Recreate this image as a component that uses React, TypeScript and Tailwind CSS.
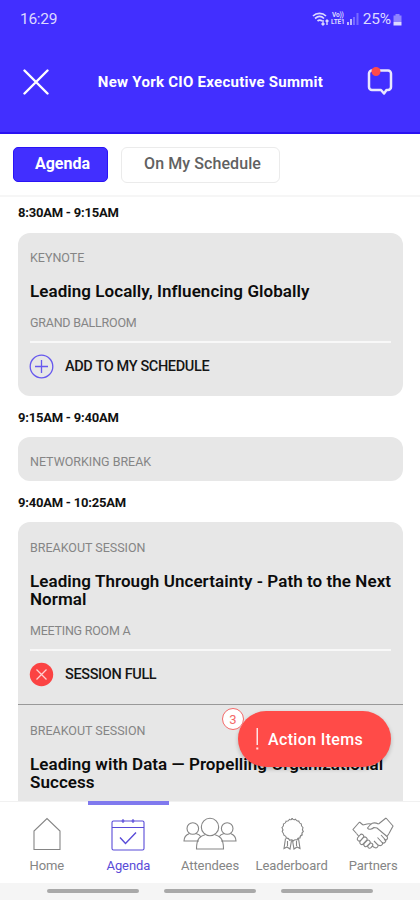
import type { ReactNode } from "react";

const bars = ["recents", "home", "back"];

const StatusBar = () => (
  <div className="flex h-[38px] items-center justify-between pl-[20px] pr-[18px] text-[15.5px] leading-[18px] text-[#dcd9ff]">
    <span className="tracking-[-0.3px]">16:29</span>
    <div className="flex items-center">
      <svg width="18" height="14" viewBox="0 0 18 14" fill="none" stroke="currentColor" strokeWidth="1.7">
        <path d="M1 4C4.500 .5 10.500 .5 14 4M3 6.500C6 4 9.500 4 12 6.500M5.500 9C7 7.800 8.500 7.800 10 9" />
        <path d="M11 8v5M9.500 11.500L11 13l1.500-1.500M15 13V8M13.600 9.500L15 8l1.500 1.500" strokeWidth="1.400" />
      </svg>
      <div className="flex w-[16px] flex-col items-center text-[6.5px] font-bold leading-[7px] tracking-[-0.2px]">
        <span>Vo))</span>
        <span>LTE1</span>
      </div>
      <svg className="ml-px" width="12" height="12" viewBox="0 0 12 12" fill="currentColor">
        <path d="M0 12V9h2v3zM3 12V6h2v6z" opacity=".8" />
        <path d="M6 12V4h2v8zM9.500 12V0h2v12z" opacity=".35" />
      </svg>
      <span className="ml-[4px] tracking-[-0.2px]">25%</span>
      <svg className="ml-[2px]" width="9" height="13" viewBox="0 0 9 13" fill="currentColor">
        <path d="M.5 2.500h2V1h4v1.500h2v6.500h-8z" opacity=".5" />
        <path d="M.5 9h8v3.500h-8z" />
      </svg>
    </div>
  </div>
);

const Header = () => (
  <header className="h-[134px] shrink-0 border-b-2 border-[#2a12f2] bg-[#422fff] text-white">
    <StatusBar />
    <div className="flex h-[88px] items-center justify-between pl-[23px] pr-[26px]">
      <svg width="26" height="26" viewBox="0 0 26 26" stroke="currentColor" strokeWidth="2.400" strokeLinecap="round">
        <path d="M1.500 1.500l23 23M24.500 1.500l-23 23" />
      </svg>
      <h1 className="pl-[6px] text-[15px] font-bold tracking-[0.27px]">New York CIO Executive Summit</h1>
      <svg width="28" height="30" viewBox="0 0 28 30" fill="none">
        <path d="M6 3.500h16a3 3 0 0 1 3 3V20a3 3 0 0 1-3 3h-1.500l-2.500 3.500-3-3.500H6a3 3 0 0 1-3-3V6.500a3 3 0 0 1 3-3z" stroke="#e9e7ff" strokeWidth="2.500" strokeLinejoin="round" />
        <circle cx="10" cy="4.500" r="4.500" fill="#ff4a4a" />
      </svg>
    </div>
  </header>
);

const Tabs = () => (
  <div className="flex h-[63px] shrink-0 gap-[13px] border-b-2 border-[#f6f6f6] pl-[13px] pt-[13px] text-[16px]">
    <button className="h-[35px] w-[95px] rounded-[5px] border border-[#2a14f5] bg-[#422fff] pb-[2px] pl-[4px] font-bold text-white">Agenda</button>
    <button className="h-[36px] w-[159px] rounded-[6px] border border-[#ebebeb] pb-[2px] pl-[4px] font-medium tracking-[0.08px] text-[#616161]">On My Schedule</button>
  </div>
);

const Time = ({ children }: { children: ReactNode }) => (
  <h2 className="h-[14px] text-[13px] font-bold leading-[14px] tracking-[-0.22px] text-[#111]">{children}</h2>
);

const Label = ({ children }: { children: ReactNode }) => (
  <p className="h-[14px] text-[12.5px] leading-[14px] tracking-[-0.02px] text-[#858585]">{children}</p>
);

const Room = ({ children }: { children: ReactNode }) => (
  <p className="mt-[16px] h-[14px] text-[12.5px] leading-[14px] tracking-[-0.24px] text-[#858585]">{children}</p>
);

const Title = ({ children }: { children: ReactNode }) => (
  <h3 className="mt-[17px] whitespace-nowrap text-[17px] font-semibold leading-[18px] tracking-[0.06px] text-[#0c0c0c]">{children}</h3>
);

const Plus = () => (
  <svg width="25" height="25" viewBox="0 0 25 25" fill="none" stroke="#6658ee" strokeWidth="1.300">
    <circle cx="12.500" cy="12.500" r="11.300" />
    <path d="M12.500 6v13M6 12.500h13" />
  </svg>
);

const Full = () => (
  <svg width="25" height="25" viewBox="0 0 25 25" fill="none">
    <circle cx="12.500" cy="12.500" r="11.700" fill="#fb4343" />
    <path d="M7.500 7.500l10 10M17.500 7.500l-10 10" stroke="#ffd0d0" strokeWidth="1.300" />
  </svg>
);

const Action = ({ icon, children }: { icon: ReactNode; children: ReactNode }) => (
  <div className="mt-[11px] flex items-center gap-[11px] border-t-2 border-[#f8f8f8] pt-[11px] text-[14.5px] font-medium tracking-[-0.36px] text-[#161616]">
    <span className="-ml-px">{icon}</span>
    <span className="pt-px">{children}</span>
  </div>
);

const Agenda = () => (
  <main className="relative h-[604px] shrink-0 overflow-hidden pl-[18px] pr-[17px] pt-[9px]">
    <Time>8:30AM - 9:15AM</Time>
    <section className="mt-[13px] h-[163px] rounded-[12px] bg-[#e7e7e7] px-[12px] pt-[18px]">
      <Label>KEYNOTE</Label>
      <Title>Leading Locally, Influencing Globally</Title>
      <Room>GRAND BALLROOM</Room>
      <Action icon={<Plus />}>ADD TO MY SCHEDULE</Action>
    </section>

    <div className="mt-[15px]">
      <Time>9:15AM - 9:40AM</Time>
    </div>
    <section className="mt-[12px] h-[44px] rounded-[12px] bg-[#e7e7e7] px-[12px] pt-[18px]">
      <Label>NETWORKING BREAK</Label>
    </section>

    <div className="mt-[15px]">
      <Time>9:40AM - 10:25AM</Time>
    </div>
    <section className="mt-[12px] h-[182px] rounded-t-[12px] bg-[#e7e7e7] px-[12px] pt-[19px]">
      <Label>BREAKOUT SESSION</Label>
      <Title>
        Leading Through Uncertainty - Path to the Next
        <br />
        Normal
      </Title>
      <Room>MEETING ROOM A</Room>
      <Action icon={<Full />}>SESSION FULL</Action>
    </section>
    <section className="h-[120px] border-t border-[#999] bg-[#e7e7e7] px-[12px] pt-[19px]">
      <Label>BREAKOUT SESSION</Label>
      <Title>
        Leading with Data — Propelling Organizational
        <br />
        Success
      </Title>
    </section>

    <button className="absolute left-[238px] top-[514px] flex h-[56px] w-[153px] items-center rounded-full bg-[#ff4b48] pl-[17px] text-[16px] font-medium tracking-[0.35px] text-white shadow-[0_2px_4px_rgba(0,0,0,0.22)]">
      <svg width="4" height="22" viewBox="0 0 4 22" fill="#ffe4e4">
        <path d="M1.500 0h1.500v17h-1.500zM1.300 19.500h2v2h-2z" />
      </svg>
      <span className="ml-[9px] pt-px">Action Items</span>
    </button>
    <span className="absolute left-[222px] top-[511px] flex h-[22px] w-[22px] items-center justify-center rounded-full border border-[#f46a6a] bg-white pt-px text-[13px] text-[#f46a6a]">3</span>
  </main>
);

const Home = () => (
  <svg width="28" height="34" viewBox="0 0 28 34">
    <path d="M1 32.500V14L14 1.500 27 14v18.500z" />
  </svg>
);

const Calendar = () => (
  <svg width="34" height="34" viewBox="0 0 34 34">
    <rect x="1" y="4" width="32" height="29" rx="1.500" />
    <path d="M1 10.500h32M12 2v4M22 2v4M10.500 4h3M20.500 4h3" />
    <path d="M9 20.500l5.500 6L25 15.500" strokeWidth="1.400" />
  </svg>
);

const People = () => (
  <svg width="54" height="34" viewBox="0 0 54 34">
    <circle cx="27" cy="10" r="8.700" />
    <path d="M22.500 17.500c-5 1.500-9 3.500-9 14.500h27c0-11-4-13-9-14.500" />
    <circle cx="9.800" cy="11.500" r="5.800" />
    <path d="M16 24H1c0-4 1.500-6 5.500-7.500M13 16.500c2.500.8 4 1.700 5 3.500" />
    <circle cx="44.200" cy="11.500" r="5.800" />
    <path d="M38 24h15c0-4-1.500-6-5.500-7.500M41 16.500c-2.500.8-4 1.700-5 3.500" />
  </svg>
);

const Award = () => (
  <svg width="26" height="34" viewBox="0 0 26 34">
    <path d="M13 1.500q1.500 2 3.500.8 1.200 2.200 3.300 1.800.4 2.400 2.500 2.900-.3 2.400 1.700 3.600-1.200 2.200.3 3.900-2 1.400-1.100 3.400-2.300.7-2.200 3-2.400-.1-3.100 2.100-2.200-.9-3.500.9-1.800-1.700-3.800-.7-.9-2.300-3.200-2-.1-2.400-2.400-3-.7-2.300-1.800-3.700 1.400-2-.2-3.900 2-1.300 1.500-3.600 2.300-.4 2.600-2.800 2.300.3 3.300-1.800 1.700 1.100 2.900-.9z" />
    <path d="M6.500 21.500L5 31.500l3-1.500 3 2 1.500-8.500M19.500 21.500l1.500 10-3-1.500-3 2-1.500-8.500M8.500 24v5M17.500 24v5" />
  </svg>
);

const Handshake = () => (
  <svg width="42" height="34" viewBox="0 0 42 34">
    <path d="M7.500 5L1 12.500l3.500 4M7.500 5L11 8M34 1l7 8-4 7.500M34 1l-7.500 6" />
    <path d="M11 8c2.500-.5 4.500-2 8-1M26.500 7c-4-2-6-1.500-8 .5l-3 3.500c1 2 4.500 1.500 6.500-.5l3 .5 10 8.500c1.500 2-.5 4.500-3 3" />
    <path d="M29 18l4.500 5c1 2-1.500 4-3.500 2.500M25.500 20.500l5 5.500c.5 2-2 3.500-4 2M22 24l4 4c.5 2-1.500 3.500-3.500 2.500L20 29" />
    <path d="M4.500 16.500L6.500 19M37 16.500L35 19.500M8 18l-2.500 3c-1 2 1.500 4 3 2.500l3-3.500c1-2-2-4-3.500-2zM11.500 20.500l-3.500 4c-1 2 1.500 4 3.200 2.500l3.800-4c1-2-2-4-3.500-2.500zM15 23.500l-3 3.200c-1 2 1.500 4 3 2.500l3-3c1-2-1.500-4-3-2.700zM18 26.500l-2 2c-1 2 1.500 3.500 3 2.200l1.700-2c.8-1.700-1.500-3.500-2.700-2.200z" />
  </svg>
);

const tabs = [
  { name: "Home", icon: <Home /> },
  { name: "Agenda", icon: <Calendar /> },
  { name: "Attendees", icon: <People /> },
  { name: "Leaderboard", icon: <Award /> },
  { name: "Partners", icon: <Handshake /> },
];

const BottomNav = () => (
  <nav className="grid h-[82px] shrink-0 grid-cols-5 border-t border-[#f1f1f1] bg-white px-[6px]">
    {tabs.map((tab) => (
      <div
        key={tab.name}
        className={
          tab.name === "Agenda"
            ? "-mt-px flex flex-col items-center border-t-[4px] border-[#8079ee] pt-[12px] text-[#594bd8]"
            : "-mt-px flex flex-col items-center border-t-[4px] border-transparent pt-[12px] text-[#858585]"
        }
      >
        <div className="fill-none stroke-current stroke-[1.1]">{tab.icon}</div>
        <span className="mt-[7px] text-[13px] leading-[16px] tracking-[-0.08px]">{tab.name}</span>
      </div>
    ))}
  </nav>
);

export default function App() {
  return (
    <div className="flex h-[900px] w-[420px] flex-col overflow-hidden bg-white font-['Roboto',sans-serif]">
      <Header />
      <Tabs />
      <Agenda />
      <BottomNav />
      <footer className="flex h-[17px] shrink-0 justify-center gap-[25px] bg-[#f5f5f5] pt-[6px]">
        {bars.map((bar) => (
          <div key={bar} className="h-[4px] w-[92px] rounded-full bg-[#a9a9a9]" />
        ))}
      </footer>
    </div>
  );
}
